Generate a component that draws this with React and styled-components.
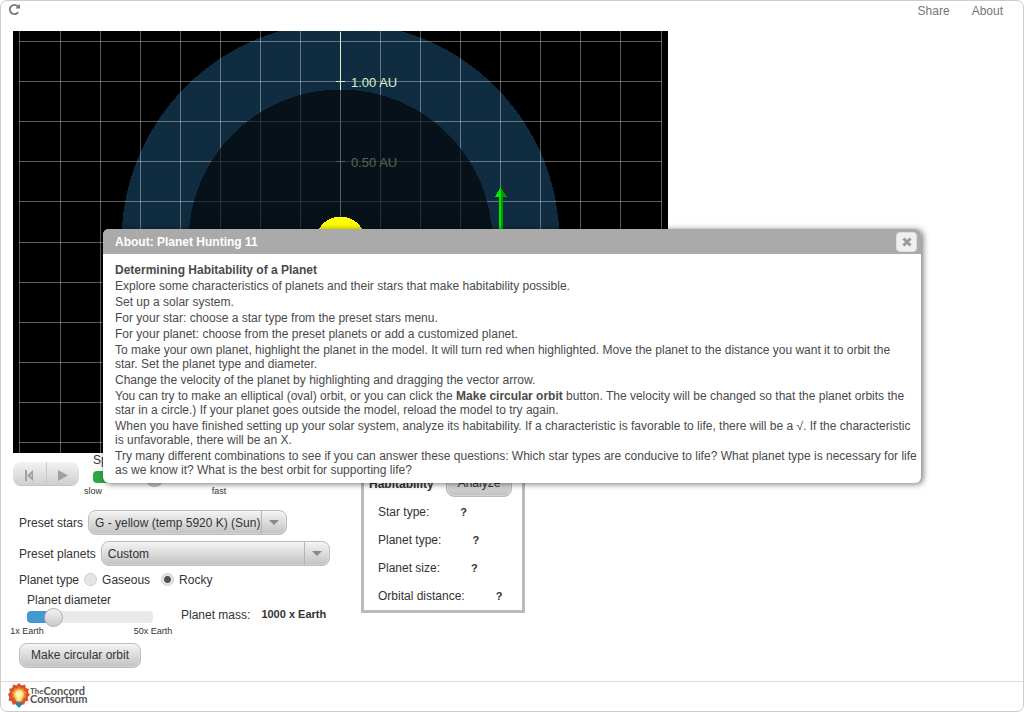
import React, { useState } from "react";
import styled, { createGlobalStyle, css } from "styled-components";

const GlobalStyle = createGlobalStyle`
  *, *::before, *::after { box-sizing: border-box; }
  body {
    margin: 0;
    background: #fff;
    color: #333;
    font: 12px/14px "Liberation Sans", Arial, sans-serif;
  }
  button, select, input { font: inherit; color: inherit; margin: 0; }
`;

const Page = styled.div`
  position: relative;
  display: flex;
  flex-direction: column;
  min-height: 100vh;
  border: 1px solid #ccc;
  border-radius: 7px;
`;

const TopBar = styled.header`
  display: flex;
  justify-content: space-between;
  align-items: flex-start;
  height: 30px;
  padding: 3px 20px 0 8px;
  color: #777;
`;

const ReloadButton = styled.button`
  display: flex;
  padding: 0;
  border: 0;
  background: none;
  color: #777;
  svg { width: 11px; height: 11px; fill: currentColor; }
`;

const TopLinks = styled.nav`
  display: flex;
  gap: 22px;
  a { color: inherit; text-decoration: none; }
`;

const Main = styled.main`
  flex: 1;
  padding: 0 12px;
`;

const SpaceView = styled.svg`
  display: block;
  width: 100%;
  max-width: 655px;
  height: auto;
  background: #000;
`;

const Panels = styled.div`
  display: flex;
  flex-wrap: wrap;
  align-items: flex-start;
`;

const Controls = styled.div`
  display: flex;
  flex-direction: column;
  width: 348px;
`;

const Playback = styled.div`
  display: flex;
  gap: 14px;
  margin-bottom: 14px;
`;

const raised = css`
  border: 1px solid #bbb;
  background: linear-gradient(#f4f4f4, #c2c2c2);
  box-shadow: inset 0 0 0 1px rgba(255, 255, 255, 0.25);
`;

const PlayGroup = styled.div`
  display: flex;
  width: 66px;
  height: 24px;
  margin-top: 9px;
  border-radius: 8px;
  overflow: hidden;
`;

const PlayButton = styled.button`
  flex: 1;
  display: flex;
  align-items: center;
  justify-content: center;
  padding: 5px 0 0;
  border: 0;
  border-bottom: 1px solid #c4c4c4;
  background: linear-gradient(#f3f3f3, #cfcfcf);
  color: #a0a0a0;
  & + & { border-left: 1px solid #c8c8c8; }
  svg { width: 12px; height: 12px; fill: currentColor; }
`;

const FieldRow = styled.div`
  display: flex;
  align-items: center;
  gap: 5px;
  min-height: ${(p) => p.$height || 25}px;
  margin: 0 0 6px 6px;
`;

const SelectBox = styled.span`
  position: relative;
  display: flex;
  width: ${(p) => p.$width}px;
  &::before {
    content: "";
    position: absolute;
    right: 25px;
    top: 1px;
    bottom: 1px;
    border-left: 1px solid #b4b4b4;
    pointer-events: none;
  }
  &::after {
    content: "";
    position: absolute;
    right: 8px;
    top: 10px;
    border: 5px solid transparent;
    border-top-color: #888;
    border-bottom: 0;
    pointer-events: none;
  }
`;

const Select = styled.select`
  ${raised}
  appearance: none;
  width: 100%;
  height: 25px;
  padding: 1px 26px 0 6px;
  border-radius: 8px;
  text-overflow: clip;
`;

const RadioLabel = styled.label`
  display: flex;
  align-items: center;
  gap: 5px;
  margin-right: 6px;
`;

const Radio = styled.input`
  appearance: none;
  width: 13px;
  height: 13px;
  border: 1px solid #ccc;
  border-radius: 50%;
  background: #e4e5e7;
  &:checked {
    background: radial-gradient(circle, #505255 0 3px, #e4e5e7 4px);
  }
`;

const SliderField = styled.div`
  width: 126px;
  label { display: block; }
`;

const Range = styled.input`
  appearance: none;
  display: block;
  width: 100%;
  height: 19px;
  background: none;
  &::-webkit-slider-runnable-track {
    height: 12px;
    border-radius: 4px;
    background: linear-gradient(to right, ${(p) => p.$fill} ${(p) => p.value}%, #e9e9e9 ${(p) => p.value}%);
  }
  &::-webkit-slider-thumb {
    appearance: none;
    width: 19px;
    height: 19px;
    margin-top: -3px;
    border: 1px solid #b0b0b0;
    border-radius: 50%;
    background: linear-gradient(#f2f2f2, #cacaca);
  }
`;

const RangeEnds = styled.div`
  display: flex;
  justify-content: space-between;
  margin: 0 -20px;
  font-size: 9px;
  line-height: 10px;
  span { width: 40px; text-align: center; white-space: nowrap; }
`;

const DiameterRow = styled.div`
  display: flex;
  align-items: center;
  margin: 0 0 7px 14px;
`;

const Mass = styled.p`
  display: flex;
  gap: 11px;
  margin: 0 0 0 28px;
  strong { font-size: 11px; line-height: 12px; }
`;

const Button = styled.button`
  ${raised}
  height: 25px;
  padding: 0 11px 2px;
  border-radius: 8px;
`;

const OrbitButton = styled(Button)`
  align-self: flex-start;
  margin-left: 6px;
`;

const Habitability = styled.section`
  width: 164px;
  margin-top: 8px;
  padding-top: 6px;
  border: 3px solid #bbb;
`;

const HabitHead = styled.div`
  display: flex;
  align-items: center;
  gap: 12px;
  height: 28px;
  padding-left: 5px;
  h2 { margin: 0; font-size: 12px; line-height: 14px; }
`;

const HabitRow = styled.div`
  display: flex;
  align-items: center;
  gap: 31px;
  height: 28px;
  padding-left: 14px;
  strong { font-size: 11px; }
`;

const Footer = styled.footer`
  height: 30px;
  padding: 1px 6px;
  border-top: 1px solid #ddd;
`;

const Logo = styled.a`
  display: inline-flex;
  align-items: flex-start;
  color: #555;
  text-decoration: none;
  svg { width: 23px; height: 25px; }
`;

const LogoText = styled.span`
  display: flex;
  flex-direction: column;
  padding-top: 4px;
  font: 700 11px/8px Lato, sans-serif;
`;

const LogoLine = styled.span`
  display: flex;
  small { font-size: 8px; line-height: 8px; }
`;

const Dialog = styled.section`
  position: absolute;
  top: 228px;
  left: 102px;
  right: 102px;
  border-radius: 6px;
  background: #fff;
  box-shadow: 2px 1px 6px rgba(0, 0, 0, 0.55);
  color: #4a4a4a;
`;

const DialogHead = styled.header`
  display: flex;
  align-items: center;
  justify-content: space-between;
  height: 25px;
  padding: 0 4px 0 12px;
  border-radius: 6px 6px 0 0;
  background: #aaa;
  color: #fff;
  h1 { margin: 0; font-size: 12px; line-height: 14px; }
`;

const CloseButton = styled.button`
  display: flex;
  align-items: center;
  justify-content: center;
  width: 21px;
  height: 20px;
  padding: 0;
  border: 1px solid #ddd;
  border-radius: 4px;
  background: #f0f0f0;
  color: #999;
  svg { width: 10px; height: 10px; }
`;

const DialogBody = styled.div`
  padding: 9px 3px 4px 12px;
  p { margin: 0 0 2px; }
`;

const verticals = [6, ...Array.from({ length: 15 }, (_, i) => 47 + i * 40), 648];
const horizontals = [10, 50, 90, 130, 170, 211, 251, 291, 331, 371, 411];

function SolarSystem() {
  return (
    <SpaceView viewBox="0 0 655 422" role="img" aria-label="Solar system model">
      <circle cx="327.5" cy="210.5" r="219" fill="#0f2c40" shapeRendering="crispEdges" />
      <g stroke="#fff" strokeOpacity="0.36" shapeRendering="crispEdges">
        {verticals.map((x) => <path key={x} d={`M${x + 0.5} 0V422`} />)}
        {horizontals.map((y) => <path key={y} d={`M6 ${y + 0.5}H649`} />)}
      </g>
      <g stroke="#d9f3cf" shapeRendering="crispEdges">
        <path d="M327.500 1V422M323 50.500H332M323 130.500H332" />
      </g>
      <g fill="#d9f3c8" fontFamily="Liberation Sans, Arial, sans-serif" fontSize="13">
        <text x="338" y="56">1.00 AU</text>
        <text x="338" y="136">0.50 AU</text>
      </g>
      <circle cx="327.5" cy="210.5" r="152" fill="#000" fillOpacity="0.6" shapeRendering="crispEdges" />
      <circle cx="327.5" cy="210.5" r="25" fill="#ff0" shapeRendering="crispEdges" />
      <g shapeRendering="crispEdges">
        <path d="M486 165h2v45h-2zM482 166l5.500-10v10z" fill="#00e600" />
        <path d="M488 165h2v45h-2zM487.500 156l6.500 10h-6.500z" fill="#009a00" />
      </g>
    </SpaceView>
  );
}

function Slider({ id, label, initial, fill, low, high }) {
  const [value, setValue] = useState(initial);
  return (
    <SliderField>
      <label htmlFor={id}>{label}</label>
      <Range id={id} type="range" min="0" max="100" value={value} $fill={fill} onChange={(e) => setValue(e.target.value)} />
      <RangeEnds><span>{low}</span><span>{high}</span></RangeEnds>
    </SliderField>
  );
}

function ConcordMark() {
  return (
    <svg viewBox="0 0 23 25" aria-hidden="true">
      <path fill="#d9532a" d="M12 0l2.600 2.500L18 1.500l.8 3.500 3.200 1-1 3.200 2 2.600-2.300 2.500.8 3.300-3.300 1-1 3.200-3.200-.6H9l-3.200.6-1-3.200-3.300-1 .8-3.300L1 11.600l2-2.500L2 6l3.200-1L6 1.500l3.400 1z" />
      <path fill="#f08a33" d="M12 4l2 1.500 2.500-.2.800 2.400 2 1.600-1 2.300.6 2.500-2.200 1.200-1 2.400H8.300l-1-2.400-2.200-1.200.6-2.500-1-2.300 2-1.600.8-2.400 2.500.2z" />
      <path fill="#fbd668" d="M12 6.500a5 5 0 0 1 5 5c0 2.500-2.400 3.700-2.600 7H9.600C9.400 15.200 7 14 7 11.500a5 5 0 0 1 5-5z" />
      <path fill="#fff3bd" d="M12 8.500a3 3 0 0 1 3 3c0 1.500-1.800 2.400-2 6h-2c-.2-3.600-2-4.500-2-6a3 3 0 0 1 3-3z" />
      <path fill="#23899a" d="M9 19.500h6v2.500l-1.500 1.200L12 25l-1.500-1.800L9 22z" />
    </svg>
  );
}

function AboutDialog({ onClose }) {
  return (
    <Dialog role="dialog" aria-labelledby="about-title">
      <DialogHead>
        <h1 id="about-title">About: Planet Hunting 11</h1>
        <CloseButton type="button" aria-label="Close" onClick={onClose}>
          <svg viewBox="0 0 10 10"><path d="M1.500 1.500l7 7M8.500 1.500l-7 7" stroke="currentColor" strokeWidth="3" /></svg>
        </CloseButton>
      </DialogHead>
      <DialogBody>
        <p><strong>Determining Habitability of a Planet</strong></p>
        <p>Explore some characteristics of planets and their stars that make habitability possible.</p>
        <p>Set up a solar system.</p>
        <p>For your star: choose a star type from the preset stars menu.</p>
        <p>For your planet: choose from the preset planets or add a customized planet.</p>
        <p>To make your own planet, highlight the planet in the model. It will turn red when highlighted. Move the planet to the distance you want it to orbit the<br />star. Set the planet type and diameter.</p>
        <p>Change the velocity of the planet by highlighting and dragging the vector arrow.</p>
        <p>You can try to make an elliptical (oval) orbit, or you can click the <strong>Make circular orbit</strong> button. The velocity will be changed so that the planet orbits the star in a circle.) If your planet goes outside the model, reload the model to try again.</p>
        <p>When you have finished setting up your solar system, analyze its habitability. If a characteristic is favorable to life, there will be a √. If the characteristic is unfavorable, there will be an X.</p>
        <p>Try many different combinations to see if you can answer these questions: Which star types are conducive to life? What planet type is necessary for life as we know it? What is the best orbit for supporting life?</p>
      </DialogBody>
    </Dialog>
  );
}

export default function App() {
  const [aboutOpen, setAboutOpen] = useState(true);
  return (
    <>
      <GlobalStyle />
      <Page>
        <TopBar>
          <ReloadButton type="button" aria-label="Reload">
            <svg viewBox="0 128 1536 1536"><path d="M1536 256v448q0 26-19 45t-45 19h-448q-42 0-59-40-17-39 14-69l138-138q-148-137-349-137-104 0-198.500 40.500t-163.500 109.500-109.500 163.500-40.500 198.500 40.500 198.500 109.500 163.500 163.500 109.500 198.500 40.500q119 0 225-52t179-147q7-10 23-12 15 0 25 9l137 138q9 8 9.500 20.500t-7.500 22.500q-109 132-264 204.500t-327 72.500q-156 0-298-61t-245-164-164-245-61-298 61-298 164-245 245-164 298-61q147 0 284.500 55.500t244.500 156.500l130-129q29-31 70-14 39 17 39 59z" /></svg>
          </ReloadButton>
          <TopLinks>
            <a href="#share">Share</a>
            <a href="#about" onClick={() => setAboutOpen(true)}>About</a>
          </TopLinks>
        </TopBar>
        <Main>
          <SolarSystem />
          <Panels>
            <Controls>
              <Playback>
                <PlayGroup>
                  <PlayButton type="button" aria-label="Reset">
                    <svg viewBox="0 0 12 12"><path d="M2 0h2v11H2zM10 0v11L4 5.500zM8.500 4L7 5.500 8.500 7z" fillRule="evenodd" /></svg>
                  </PlayButton>
                  <PlayButton type="button" aria-label="Play">
                    <svg viewBox="0 0 12 12"><path d="M1 0l10 5.500L1 11z" /></svg>
                  </PlayButton>
                </PlayGroup>
                <Slider id="speed" label="Speed" initial={49} fill="#2da843" low="slow" high="fast" />
              </Playback>
              <FieldRow>
                <label htmlFor="stars">Preset stars</label>
                <SelectBox $width={199}>
                  <Select id="stars"><option>G - yellow (temp 5920 K) (Sun)</option></Select>
                </SelectBox>
              </FieldRow>
              <FieldRow>
                <label htmlFor="planets">Preset planets</label>
                <SelectBox $width={229}>
                  <Select id="planets"><option>Custom</option></Select>
                </SelectBox>
              </FieldRow>
              <FieldRow role="radiogroup" aria-labelledby="type-label" $height={15}>
                <span id="type-label">Planet type</span>
                <RadioLabel><Radio type="radio" name="type" />Gaseous</RadioLabel>
                <RadioLabel><Radio type="radio" name="type" defaultChecked />Rocky</RadioLabel>
              </FieldRow>
              <DiameterRow>
                <Slider id="diameter" label="Planet diameter" initial={16} fill="#4499d0" low="1x Earth" high="50x Earth" />
                <Mass><span>Planet mass:</span><strong>1000 x Earth</strong></Mass>
              </DiameterRow>
              <OrbitButton type="button">Make circular orbit</OrbitButton>
            </Controls>
            <Habitability>
              <HabitHead>
                <h2>Habitability</h2>
                <Button type="button">Analyze</Button>
              </HabitHead>
              {["Star type:", "Planet type:", "Planet size:", "Orbital distance:"].map((name) => (
                <HabitRow key={name}><span>{name}</span><strong>?</strong></HabitRow>
              ))}
            </Habitability>
          </Panels>
        </Main>
        <Footer>
          <Logo href="#concord" aria-label="The Concord Consortium">
            <ConcordMark />
            <LogoText>
              <LogoLine><small>The</small>Concord</LogoLine>
              <LogoLine>Consortium</LogoLine>
            </LogoText>
          </Logo>
        </Footer>
        {aboutOpen && <AboutDialog onClose={() => setAboutOpen(false)} />}
      </Page>
    </>
  );
}
